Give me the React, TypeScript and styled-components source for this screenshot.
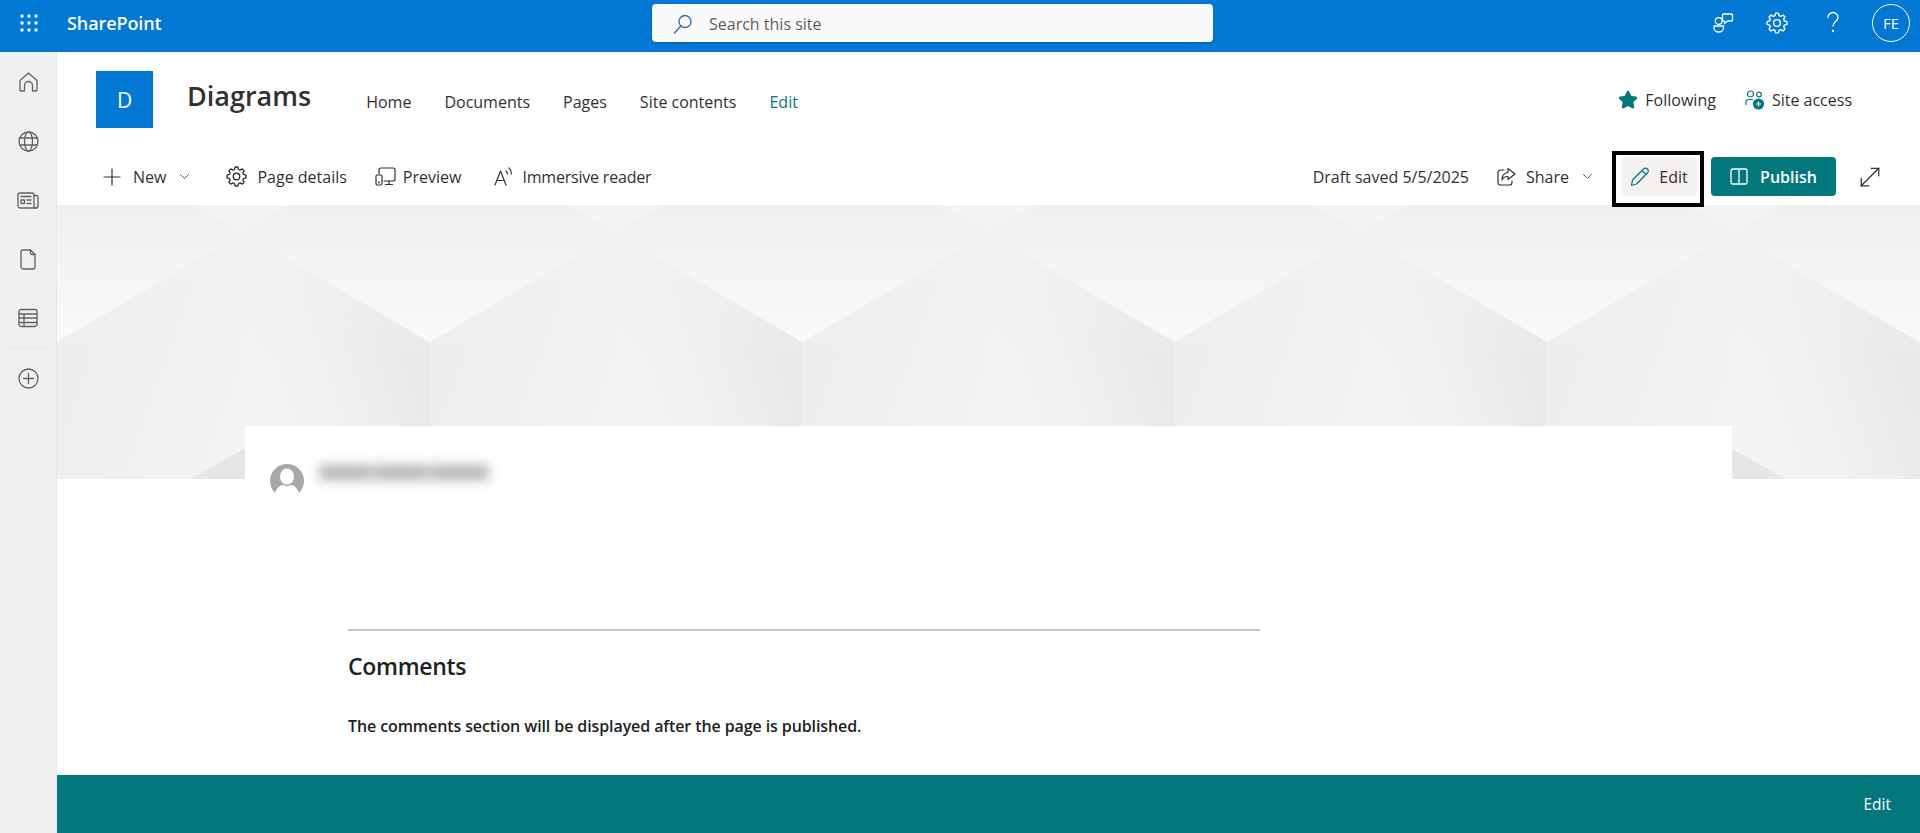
import styled, { createGlobalStyle } from "styled-components";
import { MoveDiagonal, Star } from "lucide-react";

const TEAL = "#03787c";
const INK = "#323130";

const GlobalStyle = createGlobalStyle`
  html, body { margin: 0; padding: 0; height: 100%; }
  body {
    font-family: "Open Sans", "Noto Sans", "Liberation Sans", sans-serif;
    color: ${INK};
    background: #fff;
  }
  #root { height: 100%; }
`;

const Page = styled.div`
  height: 833px;
  display: flex;
  flex-direction: column;
  overflow: hidden;
`;

const TopBar = styled.header`
  height: 52px;
  flex: none;
  box-sizing: border-box;
  padding-bottom: 6px;
  background: #0078d4;
  display: grid;
  grid-template-columns: 652px 561px 1fr;
  align-items: center;
  color: #fff;
`;

const BrandArea = styled.div`
  display: flex;
  align-items: center;
  padding-left: 20px;
  gap: 29px;
`;

const Brand = styled.span`
  font-size: 18px;
  font-weight: 600;
  letter-spacing: -0.1px;
`;

const SearchBox = styled.div`
  height: 38px;
  box-sizing: border-box;
  padding: 1px 0 0 21px;
  background: #fafafa;
  border-radius: 4px;
  display: flex;
  align-items: center;
  gap: 16px;
  color: #605e5c;
  font-size: 16px;
  box-shadow: 0 1px 2px rgba(0, 0, 0, 0.2);
`;

const TopActions = styled.div`
  display: flex;
  align-items: center;
  justify-content: flex-end;
  padding-right: 10px;
  gap: 34px;
`;

const GearSlot = styled.div`
  display: flex;
  margin: 0 3px 0 -3px;
`;

const Avatar = styled.div`
  width: 38px;
  height: 38px;
  box-sizing: border-box;
  border: 1px solid #fff;
  border-radius: 50%;
  display: flex;
  align-items: center;
  justify-content: center;
  font-size: 15px;
  margin-left: -2px;
`;

const Body = styled.div`
  flex: 1;
  display: flex;
  min-height: 0;
`;

const Sidebar = styled.nav`
  width: 57px;
  flex: none;
  box-sizing: border-box;
  background: #f0f0f0;
  border-right: 1px solid #e8e8e8;
  display: flex;
  flex-direction: column;
  align-items: center;
  padding-top: 20px;
`;

const RailSlot = styled.div<{ $after?: number }>`
  height: 20px;
  margin-bottom: ${(p) => p.$after ?? 39}px;
  display: flex;
  align-items: center;
  justify-content: center;
  color: #616161;
`;

const RailDivider = styled.div`
  width: 46px;
  height: 1px;
  background: #e6e6e6;
  margin-bottom: 19px;
`;

const Main = styled.main`
  flex: 1;
  min-width: 0;
  display: flex;
  flex-direction: column;
`;

const SiteHeader = styled.div`
  height: 96px;
  flex: none;
  box-sizing: border-box;
  display: flex;
  align-items: flex-start;
  padding: 19px 68px 0 39px;
`;

const SiteLogo = styled.div`
  width: 57px;
  height: 57px;
  background: #0078d4;
  color: #fff;
  font-size: 21px;
  display: flex;
  align-items: center;
  justify-content: center;
`;

const SiteTitle = styled.h1`
  margin: 6px 0 0 34px;
  font-size: 27px;
  line-height: 37px;
  font-weight: 600;
`;

const SiteNav = styled.div`
  display: flex;
  gap: 33px;
  margin: 20px 0 0 55px;
  font-size: 16px;
  line-height: 22px;
`;

const NavLink = styled.span<{ $active?: boolean }>`
  color: ${(p) => (p.$active ? TEAL : INK)};
`;

const SiteActions = styled.div`
  display: flex;
  gap: 29px;
  margin: 18px 0 0 auto;
`;

const SiteAction = styled.div`
  display: flex;
  align-items: center;
  gap: 7px;
  font-size: 16px;
  line-height: 22px;
`;

const CommandBar = styled.div`
  height: 57px;
  flex: none;
  display: flex;
  align-items: center;
  padding: 0 35px 0 46px;
  font-size: 16px;
`;

const CommandItem = styled.div<{ $gap?: number; $after?: number }>`
  display: flex;
  align-items: center;
  gap: ${(p) => p.$gap ?? 9}px;
  margin-right: ${(p) => p.$after ?? 0}px;
  white-space: nowrap;
`;

const TightLabel = styled.span`
  letter-spacing: -0.2px;
`;

const Spacer = styled.div`
  flex: 1;
`;

const EditFocus = styled.div`
  position: relative;
  align-self: flex-start;
  width: 92px;
  height: 56px;
  margin: 3px 7px 0 0;
  box-sizing: border-box;
  border: 4px solid #000;
  padding: 2px 0 0 5px;
`;

const EditButton = styled.div`
  width: 76px;
  height: 39px;
  background: #f3f2f1;
  border-radius: 4px;
  display: flex;
  align-items: center;
  justify-content: center;
  gap: 9px;
`;

const PublishButton = styled.div`
  width: 125px;
  height: 39px;
  background: ${TEAL};
  color: #fff;
  border-radius: 4px;
  font-weight: 600;
  display: flex;
  align-items: center;
  justify-content: center;
  gap: 12px;
  margin-right: 19px;
`;

const Banner = styled.div`
  height: 274px;
  flex: none;
  background: #f2f2f2;

  svg {
    display: block;
    width: 100%;
    height: 100%;
  }
`;

const Content = styled.div`
  flex: 1;
  min-height: 0;
  position: relative;
  margin: -53px 188px 0;
  background: #fff;
  padding: 38px 0 0 25px;
`;

const Byline = styled.div`
  display: flex;
  align-items: flex-start;
  gap: 15px;
  height: 31px;
`;

const PhotoClip = styled.div`
  width: 34px;
  height: 30px;
  overflow: hidden;
`;

const BlurName = styled.div`
  display: flex;
  gap: 2px;
  width: 170px;
  height: 15px;
  margin-top: 1px;
  filter: blur(6px);
`;

const BlurWord = styled.span<{ $w: number }>`
  width: ${(p) => p.$w}px;
  background: #b4b4b4;
`;

const Comments = styled.section`
  margin: 134px 0 0 78px;
  width: 912px;
  border-top: 2px solid #c8c6c4;
`;

const CommentsTitle = styled.h2`
  margin: 19px 0 0;
  font-size: 23px;
  line-height: 32px;
  font-weight: 600;
  color: #201f1e;
  letter-spacing: -0.3px;
`;

const CommentsNote = styled.p`
  margin: 33px 0 0;
  font-size: 16px;
  line-height: 22px;
  font-weight: 600;
  color: #201f1e;
  letter-spacing: -0.1px;
`;

const Footer = styled.footer`
  height: 58px;
  flex: none;
  background: ${TEAL};
  color: #fff;
  font-size: 15.5px;
  display: flex;
  align-items: center;
  justify-content: flex-end;
  padding-right: 29px;
`;

const line = {
  fill: "none",
  stroke: "currentColor",
  strokeWidth: 1.2,
  strokeLinecap: "round" as const,
  strokeLinejoin: "round" as const,
};

function WaffleIcon() {
  const dots = [2, 9, 16];
  return (
    <svg width="18" height="18" viewBox="0 0 18 18" fill="#fff">
      {dots.map((y) => dots.map((x) => <circle key={`${x}-${y}`} cx={x} cy={y} r="1.7" />))}
    </svg>
  );
}

function SearchIcon() {
  return (
    <svg width="20" height="20" viewBox="0 0 20 20" fill="none" stroke="#2b6ca8" strokeWidth="1.3" strokeLinecap="round">
      <circle cx="12" cy="7.5" r="6" />
      <path d="M7.8 12 1.5 19" />
    </svg>
  );
}

function FeedbackIcon() {
  return (
    <svg width="21" height="20" viewBox="0 0 21 20" {...line} strokeWidth={1.3}>
      <circle cx="5.700" cy="8" r="3.400" />
      <path d="M1 13h9.500v1.500A4.500 4.500 0 0 1 6 19h-.5A4.500 4.500 0 0 1 1 14.500z" />
      <path d="M10.500 1h8a1 1 0 0 1 1 1v5a1 1 0 0 1-1 1h-4l-3 2.500V8h-1a1 1 0 0 1-1-1V2a1 1 0 0 1 1-1z" />
    </svg>
  );
}

// eight toothed cog, same outline for the top bar and the command bar
function GearIcon({ size }: { size: number }) {
  const teeth = 8;
  const points: string[] = [];
  for (let i = 0; i < teeth; i++) {
    const a = (i / teeth) * Math.PI * 2;
    const step = (Math.PI * 2) / teeth;
    const corners: [number, number][] = [
      [7.6, a - step * 0.36],
      [10, a - step * 0.17],
      [10, a + step * 0.17],
      [7.6, a + step * 0.36],
    ];
    corners.forEach(([r, t]) => {
      points.push(`${(12 + r * Math.cos(t)).toFixed(2)},${(12 + r * Math.sin(t)).toFixed(2)}`);
    });
  }
  return (
    <svg width={size} height={size} viewBox="0 0 24 24" {...line} strokeWidth={1.4}>
      <polygon points={points.join(" ")} />
      <circle cx="12" cy="12" r="3.400" />
    </svg>
  );
}

function HelpIcon() {
  return (
    <svg width="14" height="24" viewBox="0 0 14 24" {...line} strokeWidth={1.3}>
      <path d="M2 6.500a5 5 0 0 1 10 0c0 3.500-5 4-5 8.500" />
      <circle cx="7" cy="20" r=".6" />
    </svg>
  );
}

function HomeIcon() {
  return (
    <svg width="19" height="20" viewBox="0 0 19 20" {...line} strokeWidth={1.3}>
      <path d="M1 8.500 9.500 1 18 8.500V18a1 1 0 0 1-1 1h-3.500v-5.500a4 4 0 0 0-8 0V19H2a1 1 0 0 1-1-1z" />
    </svg>
  );
}

function GlobeIcon() {
  return (
    <svg width="21" height="21" viewBox="0 0 21 21" {...line} strokeWidth={1.3}>
      <circle cx="10.500" cy="10.500" r="9.500" />
      <ellipse cx="10.500" cy="10.500" rx="4" ry="9.500" />
      <path d="M2 7h17M2 14h17" />
    </svg>
  );
}

function NewsIcon() {
  return (
    <svg width="22" height="17" viewBox="0 0 22 17" {...line} strokeWidth={1.3}>
      <path d="M17 3.500h2.500A1.500 1.500 0 0 1 21 5v9a2 2 0 0 1-2 2" />
      <path d="M3 1h12a2 2 0 0 1 2 2v11a2 2 0 0 0 2 2H3a2 2 0 0 1-2-2V3a2 2 0 0 1 2-2z" />
      <path d="M4 4.500h10M10 8h4M10 11.500h4" />
      <rect x="4" y="8" width="3.500" height="3.500" />
    </svg>
  );
}

function FileIcon() {
  return (
    <svg width="16" height="21" viewBox="0 0 16 21" {...line} strokeWidth={1.3}>
      <path d="M3 1h7.500L15 5.500V18a2 2 0 0 1-2 2H3a2 2 0 0 1-2-2V3a2 2 0 0 1 2-2z" />
      <path d="M10.500 1v3a1.500 1.500 0 0 0 1.500 1.500h3" />
    </svg>
  );
}

function ListIcon() {
  return (
    <svg width="20" height="20" viewBox="0 0 20 20" {...line} strokeWidth={1.3}>
      <path d="M3 1.500h14a2 2 0 0 1 2 2V17l-2 1.500H3a2 2 0 0 1-2-2v-13a2 2 0 0 1 2-2z" />
      <path d="M1 6h18M1 10h18M1 14.500h18M6 6v12.500" />
    </svg>
  );
}

function AddCircleIcon() {
  return (
    <svg width="21" height="21" viewBox="0 0 21 21" {...line} strokeWidth={1.3}>
      <circle cx="10.500" cy="10.500" r="9.500" />
      <path d="M10.500 5.500v10M5.500 10.500h10" />
    </svg>
  );
}

function SiteAccessIcon() {
  return (
    <svg width="20" height="20" viewBox="0 0 20 20" fill="none" stroke={TEAL} strokeWidth="1.2">
      <circle cx="5.500" cy="4" r="3" />
      <circle cx="14" cy="4.500" r="2.300" />
      <path d="M1 15v-3a2.500 2.500 0 0 1 2.500-2.500h4.500" />
      <circle cx="13.500" cy="14" r="5" fill={TEAL} />
      <path d="M13.500 11.500v5M11 14h5" stroke="#fff" />
    </svg>
  );
}

function PlusIcon() {
  return (
    <svg width="18" height="18" viewBox="0 0 18 18" {...line}>
      <path d="M9 1v16M1 9h16" />
    </svg>
  );
}

function ChevronIcon() {
  return (
    <svg width="11" height="7" viewBox="0 0 11 7" fill="none" stroke="#605e5c" strokeWidth="1" strokeLinecap="round" strokeLinejoin="round">
      <path d="m1.500 1.500 4 4 4-4" />
    </svg>
  );
}

function PreviewIcon() {
  return (
    <svg width="21" height="19" viewBox="0 0 21 19" {...line}>
      <path d="M4 7V3a2 2 0 0 1 2-2h12a2 2 0 0 1 2 2v9a2 2 0 0 1-2 2H9" />
      <rect x="1" y="8" width="6" height="10" rx="1.200" />
      <path d="M14 14v3M10.500 17.500h7" />
      <circle cx="4" cy="15.500" r=".4" />
    </svg>
  );
}

function ReaderIcon() {
  return (
    <svg width="19" height="19" viewBox="0 0 19 19" {...line}>
      <path d="M1 18 6.500 4 12 18M3 13.500h7" />
      <path d="M12 4c1 .800 1.500 2 1.500 3M15 1c1.700 1.500 2.500 3.500 2.500 6" />
    </svg>
  );
}

function ShareIcon() {
  return (
    <svg width="19" height="19" viewBox="0 0 19 19" {...line}>
      <path d="M7 3H3.500A2.500 2.500 0 0 0 1 5.500v10A2.500 2.500 0 0 0 3.500 18h9a2.500 2.500 0 0 0 2.500-2.500V14" />
      <path d="M11 1.500 18 7l-7 5.500V9.500c-3 0-5 1-6 3.500 0-4 2-7 6-7.500z" />
    </svg>
  );
}

function PencilIcon() {
  return (
    <svg width="20" height="20" viewBox="0 0 20 20" fill="none" stroke={TEAL} strokeWidth="1.2" strokeLinejoin="round">
      <path d="M2.500 13 13.500 2a2.800 2.800 0 0 1 4 4l-11 11-5 1.500z" />
      <path d="m12 3.500 4 4" />
    </svg>
  );
}

function BookIcon() {
  return (
    <svg width="18" height="17" viewBox="0 0 18 17" fill="none" stroke="#fff" strokeWidth="1.300">
      <rect x="1" y="1" width="16" height="15" rx="1.500" />
      <path d="M9 1v15" />
    </svg>
  );
}

function AuthorPhoto() {
  return (
    <svg width="34" height="34" viewBox="0 0 34 34">
      <circle cx="17" cy="17" r="17" fill="#a8a8a8" />
      <ellipse cx="17" cy="12.500" rx="7" ry="8" fill="#fff" />
      <path d="M4 34c.5-8 5-13 9.500-13 2 1.500 5 1.500 7 0C25 21 29.500 26 30 34z" fill="#fff" />
    </svg>
  );
}

// the hero picture is one tile of folded paper, repeated
const TILE = 372.5;

function BannerArt() {
  return (
    <svg viewBox="0 0 1863 274" preserveAspectRatio="none">
      <defs>
        <linearGradient id="sky" x1="0" y1="0" x2="0" y2="1">
          <stop offset="0" stopColor="#f0f0f0" />
          <stop offset="1" stopColor="#fafafa" />
        </linearGradient>
        <linearGradient id="foldLeft" gradientUnits="userSpaceOnUse" x1="10" y1="200" x2="180" y2="260">
          <stop offset="0" stopColor="#eeeeee" />
          <stop offset="1" stopColor="#f4f4f4" />
        </linearGradient>
        <linearGradient id="foldRight" gradientUnits="userSpaceOnUse" x1="186" y1="260" x2="365" y2="200">
          <stop offset="0" stopColor="#f5f5f5" />
          <stop offset=".5" stopColor="#f2f2f2" />
          <stop offset="1" stopColor="#e9e9e9" />
        </linearGradient>
        <linearGradient id="foldTop" gradientUnits="userSpaceOnUse" x1="0" y1="28" x2="0" y2="150">
          <stop offset="0" stopColor="#f1f1f1" />
          <stop offset="1" stopColor="#f1f1f1" stopOpacity="0" />
        </linearGradient>
        <pattern id="tile" width={TILE} height="274" patternUnits="userSpaceOnUse">
          <rect width={TILE} height="137" fill="url(#sky)" />
          <polygon points="139,0 233,0 186,28" fill="#f4f4f4" />
          <polygon points="0,137 186,28 186,274 0,274" fill="url(#foldLeft)" />
          <polygon points={`186,28 ${TILE},137 ${TILE},274 186,274`} fill="url(#foldRight)" />
          <polygon points={`0,137 186,28 ${TILE},137 ${TILE},150 0,150`} fill="url(#foldTop)" />
          <polygon points="134,274 186,244 238,274" fill="#e6e6e6" />
        </pattern>
      </defs>
      <rect width="1863" height="274" fill="url(#tile)" />
    </svg>
  );
}

export default function App() {
  return (
    <Page>
      <GlobalStyle />
      <TopBar>
        <BrandArea>
          <WaffleIcon />
          <Brand>SharePoint</Brand>
        </BrandArea>
        <SearchBox>
          <SearchIcon />
          <span>Search this site</span>
        </SearchBox>
        <TopActions>
          <FeedbackIcon />
          <GearSlot>
            <GearIcon size={24} />
          </GearSlot>
          <HelpIcon />
          <Avatar>FE</Avatar>
        </TopActions>
      </TopBar>
      <Body>
        <Sidebar>
          <RailSlot><HomeIcon /></RailSlot>
          <RailSlot><GlobeIcon /></RailSlot>
          <RailSlot><NewsIcon /></RailSlot>
          <RailSlot><FileIcon /></RailSlot>
          <RailSlot $after={20}><ListIcon /></RailSlot>
          <RailDivider />
          <RailSlot><AddCircleIcon /></RailSlot>
        </Sidebar>
        <Main>
          <SiteHeader>
            <SiteLogo>D</SiteLogo>
            <SiteTitle>Diagrams</SiteTitle>
            <SiteNav>
              <NavLink>Home</NavLink>
              <NavLink>Documents</NavLink>
              <NavLink>Pages</NavLink>
              <NavLink>Site contents</NavLink>
              <NavLink $active>Edit</NavLink>
            </SiteNav>
            <SiteActions>
              <SiteAction>
                <Star size={20} fill={TEAL} color={TEAL} />
                <span>Following</span>
              </SiteAction>
              <SiteAction>
                <SiteAccessIcon />
                <span>Site access</span>
              </SiteAction>
            </SiteActions>
          </SiteHeader>
          <CommandBar>
            <CommandItem $gap={12} $after={13}>
              <PlusIcon />
              <span>New</span>
            </CommandItem>
            <CommandItem $after={35}>
              <ChevronIcon />
            </CommandItem>
            <CommandItem $after={28}>
              <GearIcon size={23} />
              <span>Page details</span>
            </CommandItem>
            <CommandItem $gap={7} $after={33}>
              <PreviewIcon />
              <span>Preview</span>
            </CommandItem>
            <CommandItem>
              <ReaderIcon />
              <TightLabel>Immersive reader</TightLabel>
            </CommandItem>
            <Spacer />
            <CommandItem $after={28}>
              <span>Draft saved 5/5/2025</span>
            </CommandItem>
            <CommandItem $gap={10} $after={13}>
              <ShareIcon />
              <span>Share</span>
            </CommandItem>
            <CommandItem $after={19}>
              <ChevronIcon />
            </CommandItem>
            <EditFocus>
              <EditButton>
                <PencilIcon />
                <span>Edit</span>
              </EditButton>
            </EditFocus>
            <PublishButton>
              <BookIcon />
              <span>Publish</span>
            </PublishButton>
            <MoveDiagonal size={30} strokeWidth={1} />
          </CommandBar>
          <Banner>
            <BannerArt />
          </Banner>
          <Content>
            <Byline>
              <PhotoClip>
                <AuthorPhoto />
              </PhotoClip>
              <BlurName>
                <BlurWord $w={54} />
                <BlurWord $w={54} />
                <BlurWord $w={60} />
              </BlurName>
            </Byline>
            <Comments>
              <CommentsTitle>Comments</CommentsTitle>
              <CommentsNote>The comments section will be displayed after the page is published.</CommentsNote>
            </Comments>
          </Content>
          <Footer>Edit</Footer>
        </Main>
      </Body>
    </Page>
  );
}
